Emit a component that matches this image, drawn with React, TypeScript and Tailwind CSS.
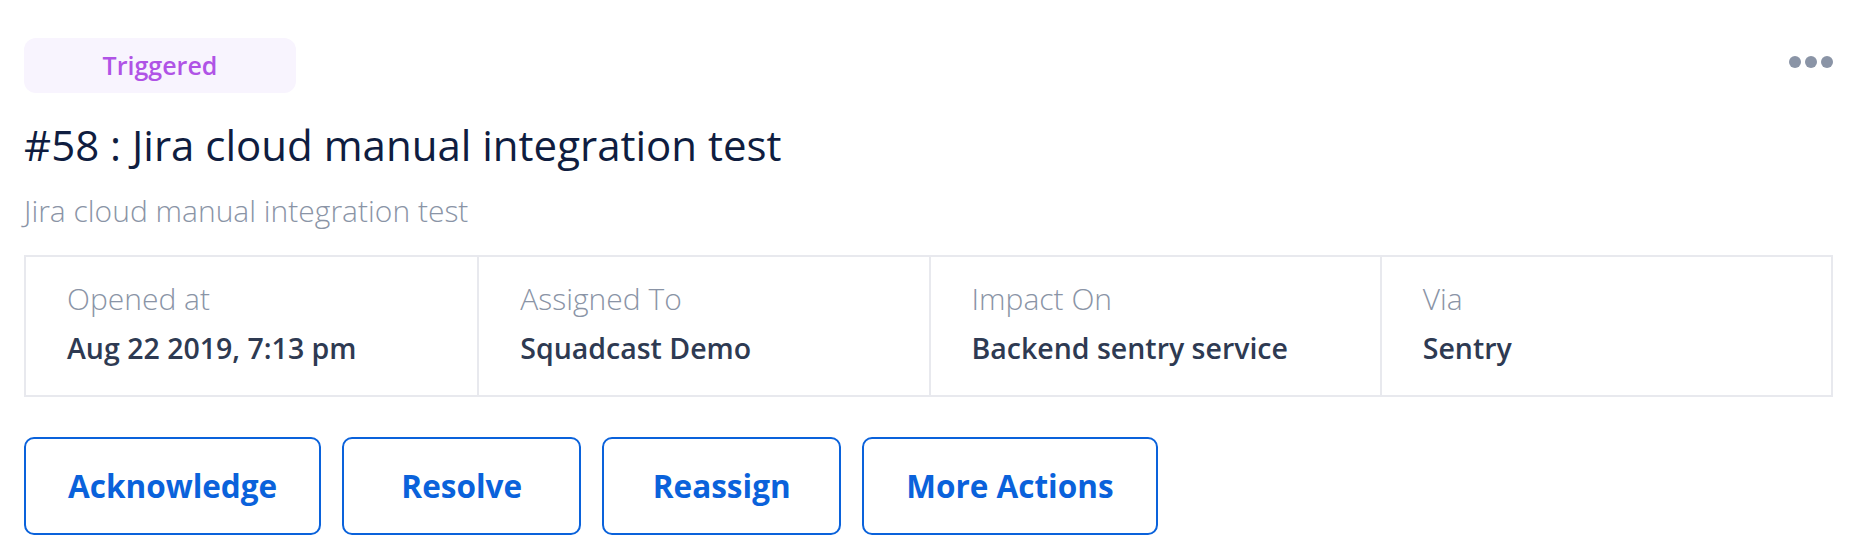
import React from "react";

const details = [
  { label: "Opened at", value: "Aug 22 2019, 7:13 pm" },
  { label: "Assigned To", value: "Squadcast Demo" },
  { label: "Impact On", value: "Backend sentry service" },
  { label: "Via", value: "Sentry" },
];

const actions = ["Acknowledge", "Resolve", "Reassign", "More Actions"];

export default function App() {
  return (
    <div className="min-h-[554px] bg-white pl-[24px] pr-[43px] pt-[38px] font-['Open_Sans',sans-serif]">
      {/* Status + menu */}
      <div className="flex items-start justify-between">
        <span className="flex h-[55px] w-[272px] items-center justify-center rounded-[12px] bg-[#f8f4fe] text-[25px] font-semibold text-[#b053e6]">
          Triggered
        </span>
        <div className="mt-[18px] flex gap-[4px]">
          <span className="h-[12px] w-[12px] rounded-full bg-[#8a94a6]" />
          <span className="h-[12px] w-[12px] rounded-full bg-[#8a94a6]" />
          <span className="h-[12px] w-[12px] rounded-full bg-[#8a94a6]" />
        </div>
      </div>

      <h1 className="mt-[24px] text-[42px] leading-[56px] font-normal text-[#0f1d40]">
        #58 : Jira cloud manual integration test
      </h1>
      <p className="mt-[22px] text-[30px] leading-[32px] font-light text-[#8a94a6]">
        Jira cloud manual integration test
      </p>

      {/* Details table */}
      <div className="mt-[28px] grid grid-cols-4 border-2 border-[#e8e9ee]">
        {details.map((d, i) => (
          <div
            key={d.label}
            className={
              "h-[138px] pl-[41px] pt-[27px] " + (i > 0 ? "border-l-2 border-[#e8e9ee]" : "")
            }
          >
            <div className="text-[30px] leading-[30px] font-light text-[#8a94a6]">{d.label}</div>
            <div className="mt-[19px] text-[28.5px] leading-[30px] font-semibold text-[#2e3a52]">{d.value}</div>
          </div>
        ))}
      </div>

      {/* Actions */}
      <div className="mt-[40px] flex gap-[21px]">
        {actions.map((a) => (
          <button
            key={a}
            className="h-[98px] min-w-[239px] rounded-[10px] border-2 border-[#0a62db] px-[42px] text-[31.5px] font-bold text-[#0a62db]"
          >
            {a}
          </button>
        ))}
      </div>
    </div>
  );
}
